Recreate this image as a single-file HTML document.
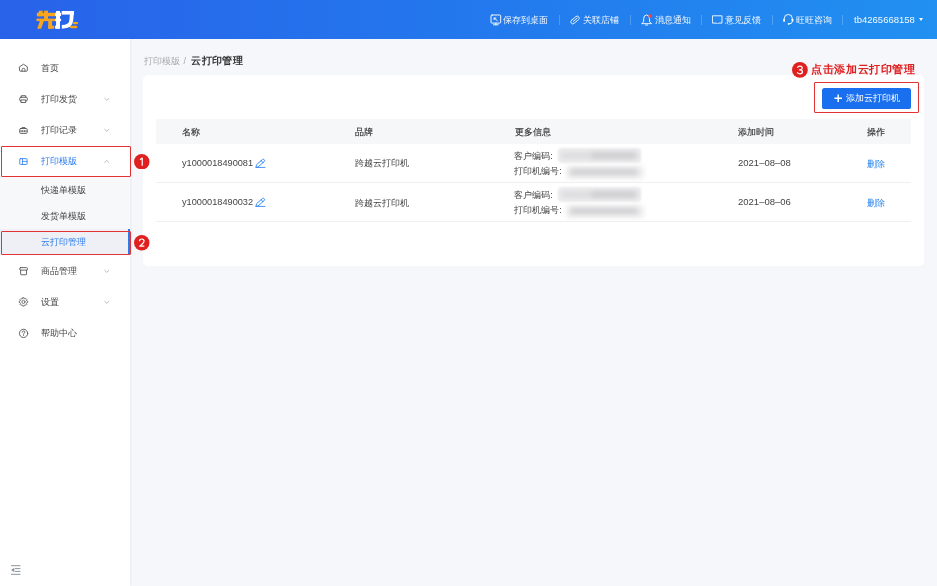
<!DOCTYPE html>
<html lang="zh">
<head>
<meta charset="utf-8">
<title>云打印管理</title>
<style>
*{box-sizing:border-box;margin:0;padding:0}
html,body{width:937px;height:586px;overflow:hidden}
body{font-family:"Liberation Sans",sans-serif;font-size:9.2px;color:#333;background:#f6f7fa;position:relative}
svg{display:block}
/* header */
.hd{position:absolute;left:0;top:0;width:937px;height:39px;background:linear-gradient(90deg,#2862e9 0%,#2378ed 50%,#2190f1 100%)}
.logo{position:absolute;left:36px;top:10px}
.hnav{position:absolute;top:0.5px;height:39px;color:rgba(255,255,255,.95);font-size:9.35px;line-height:39px;white-space:nowrap}
.hnav svg{position:absolute}
.hsep{position:absolute;top:14.6px;width:1px;height:10px;background:rgba(255,255,255,.22)}
/* sidebar */
.sb{position:absolute;left:0;top:39px;width:130.1px;height:547px;background:#fff;box-shadow:1px 0 2px rgba(0,20,60,.05)}
.it{position:absolute;left:0;width:130px;height:31px;line-height:31px;color:#444;font-size:9.2px}
.it .tx{position:absolute;left:41px;top:0}
.it .ic{position:absolute;left:19px;top:10.8px;width:9px;height:9px}
.it .ar{position:absolute;left:104.2px;top:13.2px;width:5.6px;height:4.8px}
.sub{position:absolute;left:0;width:130px;height:26px;line-height:26px;color:#444;font-size:9.2px;padding-left:41px}
.redbox{position:absolute;border:1.5px solid #e23232;border-radius:1px;z-index:5}
.num{z-index:6;position:absolute;width:15.5px;height:15.5px}
/* main */
.bc{position:absolute;left:143.9px;top:54.1px;font-size:9.2px;line-height:14px;color:#a6a8ad;white-space:nowrap}
.bc b{position:absolute;left:47.4px;top:0.1px;letter-spacing:0.35px;font-size:10.45px;color:#333;font-weight:bold}
.bc i{position:absolute;left:39.6px;top:0;font-style:normal}
.card{position:absolute;left:143px;top:75px;width:781px;height:190.6px;background:#fff;border-radius:5px}
.btn{position:absolute;left:822.4px;top:88px;width:88.5px;height:20.8px;background:#1a6fee;border-radius:2.6px;color:#fff;font-size:9.2px;line-height:20.8px;white-space:nowrap}
.th{position:absolute;left:156px;top:119.2px;width:755px;height:24.6px;background:#f6f7f9}
.c{position:absolute;white-space:nowrap;font-size:9.2px;line-height:12px;color:#444}
.c.h{font-weight:500;color:#333;-webkit-text-stroke:0.15px #333}
.c.n{font-size:9.5px}
.c.k{transform:scaleX(.968);transform-origin:0 0}
.hl{position:absolute;left:156px;width:755px;height:1px;background:#eeeff2}
.blur{position:absolute;border-radius:3px}
.a{color:#2b85f0}
.tip{position:absolute;left:811.3px;top:61px;letter-spacing:0.58px;font-size:11.4px;line-height:16px;color:#e02020;font-weight:bold;white-space:nowrap}
</style>
</head>
<body style="will-change:transform">

<!-- ===== header ===== -->
<div class="hd">
  <svg class="logo" style="left:30px;top:5px" width="56" height="30" viewBox="0 0 937 502">
    <g fill="#f9a51c">
      <rect x="115" y="130" width="306" height="58"/>
      <polygon points="150,95 216,95 196,188 130,188"/>
      <rect x="236" y="95" width="66" height="160"/>
      <rect x="108" y="228" width="313" height="42"/>
      <polygon points="166,268 232,268 186,396 120,396"/>
      <rect x="305" y="268" width="64" height="128"/>
      <rect x="305" y="346" width="100" height="50"/>
      <rect x="720" y="286" width="84" height="36" rx="18"/>
      <rect x="668" y="346" width="124" height="44" rx="21"/>
    </g>
    <g fill="#fff">
      <rect x="436" y="100" width="66" height="296"/>
      <rect x="420" y="130" width="100" height="56"/>
      <rect x="420" y="230" width="100" height="40"/>
      <rect x="420" y="346" width="82" height="50"/>
      <rect x="530" y="100" width="206" height="60"/>
    </g>
    <path d="M702 130 L690 262 Q682 362 532 366" fill="none" stroke="#fff" stroke-width="64"/>
  </svg>

  <svg style="position:absolute;left:489.6px;top:13.5px" width="12" height="12" viewBox="0 0 12 12" fill="none" stroke="#fff" stroke-linecap="round" stroke-linejoin="round"><rect x="1" y="1" width="9.7" height="8.1" rx="1" stroke-width="0.95"/><path d="M3.5 10.8 H8.2 M5.85 9.2 V10.8" stroke-width="0.95"/><path d="M4.1 4 L7.3 6.7 M4.1 5.7 V4 H5.9" stroke-width="0.9"/></svg><svg style="position:absolute;left:570.2px;top:14.5px" width="10" height="10" viewBox="0 0 11 11" fill="none" stroke="#fff" stroke-linecap="round" stroke-linejoin="round"><g transform="rotate(-40 5.5 5.5)"><rect x="0.1" y="3.3" width="10.8" height="4.4" rx="2.2" stroke-width="0.9"/><path d="M3 5.5 H8.6" stroke-width="0.9"/></g></svg><svg style="position:absolute;left:641px;top:13.5px" width="12" height="12" viewBox="0 0 12 12" fill="none" stroke="#fff" stroke-linecap="round" stroke-linejoin="round"><path d="M0.9 9.4 L2.7 7.9 V4.8 Q2.7 1 5.6 1 Q8.5 1 8.5 4.8 V7.9 L10.3 9.4 Z" stroke-width="0.9"/><path d="M4.5 11 H6.7" stroke-width="0.9"/><circle cx="9.2" cy="2.1" r="1.75" fill="#ff3d3d" stroke="none"/></svg><svg style="position:absolute;left:711.8px;top:14.6px" width="10.8" height="9.9" viewBox="0 0 12 11" fill="none" stroke="#fff" stroke-linecap="round" stroke-linejoin="round"><path d="M0.9 0.9 H11.1 V9 H7.2 L6 10.3 L4.8 9 H0.9 Z" stroke-width="1" stroke-linejoin="miter"/></svg><svg style="position:absolute;left:781.6px;top:12.7px" width="12.6" height="12.6" viewBox="0 0 12 12" fill="none" stroke="#fff" stroke-linecap="round" stroke-linejoin="round"><path d="M2.2 6.4 V5.2 Q2.2 1.4 6 1.4 Q9.8 1.4 9.8 5.2 V6.4" stroke-width="0.9"/><rect x="1.2" y="5.4" width="1.6" height="3" rx="0.6" fill="#fff" stroke="none"/><rect x="9.2" y="5.4" width="1.6" height="3" rx="0.6" fill="#fff" stroke="none"/><path d="M9.8 8.4 Q9.8 10.4 6.8 10.4" stroke-width="0.9"/><circle cx="6.3" cy="10.4" r="0.8" fill="#fff" stroke="none"/></svg>
  <div class="hnav" style="left:503.4px">保存到桌面</div>
  <div class="hsep" style="left:559.1px"></div>
  <div class="hnav" style="left:583.4px">关联店铺</div>
  <div class="hsep" style="left:629.9px"></div>
  <div class="hnav" style="left:654.5px">消息通知</div>
  <div class="hsep" style="left:701.2px"></div>
  <div class="hnav" style="left:725.2px">意见反馈</div>
  <div class="hsep" style="left:771.6px"></div>
  <div class="hnav" style="left:795.8px">旺旺咨询</div>
  <div class="hsep" style="left:842.3px"></div>
  <div class="hnav" style="left:854.1px;top:-0.4px;font-size:9.5px">tb4265668158</div>
  <div style="position:absolute;left:919.3px;top:17.9px;width:0;height:0;border-left:2.3px solid transparent;border-right:2.3px solid transparent;border-top:3.5px solid #fff"></div>
</div>

<!-- ===== sidebar ===== -->
<div class="sb">
  <svg style="position:absolute;left:18px;top:24px;overflow:visible" width="12" height="12" viewBox="0 0 12 12" fill="none" stroke-linecap="round" stroke-linejoin="round"><path d="M1.6 3.75 L5.45 1.25 L9.3 3.75 V7.6 Q9.3 8.2 8.7 8.2 H2.2 Q1.6 8.2 1.6 7.6 Z" stroke="#555" stroke-width="0.9"/><path d="M4 8.2 V6.5 Q4 5.3 5.45 5.3 Q6.9 5.3 6.9 6.5 V8.2" stroke="#555" stroke-width="0.85"/></svg>
  <svg style="position:absolute;left:18px;top:55px;overflow:visible" width="12" height="12" viewBox="0 0 12 12" fill="none" stroke-linecap="round" stroke-linejoin="round"><path d="M3.3 3.2 V1.7 H7.7 V3.2" stroke="#555" stroke-width="0.9"/><rect x="1.75" y="3.3" width="7.5" height="3.6" rx="0.9" stroke="#555" stroke-width="0.9"/><rect x="3.3" y="5.9" width="4.4" height="2.6" fill="#fff" stroke="#555" stroke-width="0.9"/></svg>
  <svg style="position:absolute;left:18px;top:87px;overflow:visible" width="12" height="12" viewBox="0 0 12 12" fill="none" stroke-linecap="round" stroke-linejoin="round"><path d="M4 2.4 V1.5 H7 V2.4" stroke="#555" stroke-width="0.85"/><rect x="1.75" y="2.5" width="7.4" height="4.9" rx="0.9" stroke="#555" stroke-width="0.9"/><path d="M1.8 5.1 H9.1" stroke="#555" stroke-width="0.8"/><path d="M4.2 4.4 V5.8 M6.7 4.4 V5.8" stroke="#555" stroke-width="0.8"/></svg>
  <svg style="position:absolute;left:18px;top:118px;overflow:visible" width="12" height="12" viewBox="0 0 12 12" fill="none" stroke-linecap="round" stroke-linejoin="round"><rect x="1.75" y="1.65" width="7.3" height="5.8" rx="0.6" stroke="#3585f2" stroke-width="0.9"/><path d="M4.45 1.7 V7.4 M4.45 4.4 H9" stroke="#3585f2" stroke-width="0.85"/></svg>
  <svg style="position:absolute;left:18px;top:227px;overflow:visible" width="12" height="12" viewBox="0 0 12 12" fill="none" stroke-linecap="round" stroke-linejoin="round"><rect x="1.65" y="1.65" width="7.9" height="2.5" rx="1" stroke="#555" stroke-width="0.9"/><path d="M2.65 4.2 V8.2 Q2.65 8.75 3.2 8.75 H8 Q8.55 8.75 8.55 8.2 V4.2" stroke="#555" stroke-width="0.9"/></svg>
  <svg style="position:absolute;left:18px;top:257px;overflow:visible" width="12" height="12" viewBox="0 0 12 12" fill="none" stroke-linecap="round" stroke-linejoin="round"><path d="M4.79 1.70 L6.11 1.70 L6.31 2.56 L7.21 2.93 L7.95 2.46 L8.89 3.40 L8.42 4.14 L8.79 5.04 L9.65 5.24 L9.65 6.56 L8.79 6.76 L8.42 7.66 L8.89 8.40 L7.95 9.34 L7.21 8.87 L6.31 9.24 L6.11 10.10 L4.79 10.10 L4.59 9.24 L3.69 8.87 L2.95 9.34 L2.01 8.40 L2.48 7.66 L2.11 6.76 L1.25 6.56 L1.25 5.24 L2.11 5.04 L2.48 4.14 L2.01 3.40 L2.95 2.46 L3.69 2.93 L4.59 2.56 Z" stroke="#555" stroke-width="0.8"/><circle cx="5.45" cy="5.9" r="1.55" stroke="#555" stroke-width="0.8"/></svg>
  <svg style="position:absolute;left:18px;top:289px;overflow:visible" width="12" height="12" viewBox="0 0 12 12" fill="none" stroke-linecap="round" stroke-linejoin="round"><circle cx="5.6" cy="5.4" r="4.15" stroke="#555" stroke-width="0.9"/><path d="M4.199999999999999 4.2 Q4.199999999999999 3.0000000000000004 5.6 3.0000000000000004 Q7.0 3.0000000000000004 7.0 4.2 Q7.0 5.0 5.6 5.6000000000000005 V6.300000000000001" stroke="#555" stroke-width="0.85"/><circle cx="5.6" cy="7.6000000000000005" r="0.5" fill="#555"/></svg>
  <div class="it" style="top:13.8px"><span class="tx">首页</span></div>
  <div class="it" style="top:45.1px"><span class="tx">打印发货</span><svg class="ar" width="7" height="6" viewBox="0 0 7 6" fill="none" stroke-linecap="round" stroke-linejoin="round" style=""><path d="M1 1.8 L3.5 4.2 L6 1.8" stroke="#999" stroke-width="0.85"/></svg></div>
  <div class="it" style="top:76.3px"><span class="tx">打印记录</span><svg class="ar" width="7" height="6" viewBox="0 0 7 6" fill="none" stroke-linecap="round" stroke-linejoin="round" style=""><path d="M1 1.8 L3.5 4.2 L6 1.8" stroke="#999" stroke-width="0.85"/></svg></div>
  <div class="it" style="top:107.3px;color:#2b7bf0"><span class="tx">打印模版</span><svg class="ar" width="7" height="6" viewBox="0 0 7 6" fill="none" stroke-linecap="round" stroke-linejoin="round" style=""><path d="M1 4.2 L3.5 1.8 L6 4.2" stroke="#999" stroke-width="0.85"/></svg></div>
  <div style="position:absolute;left:0;top:138px;width:130px;height:78px;background:#f7f8fa"></div>
  <div class="sub" style="top:138px">快递单模版</div>
  <div class="sub" style="top:164px">发货单模版</div>
  <div class="sub" style="top:190px;background:#eef0f5;color:#2b7bf0;border-right:2px solid #2b7bf0">云打印管理</div>
  <div class="it" style="top:216.6px"><span class="tx">商品管理</span><svg class="ar" width="7" height="6" viewBox="0 0 7 6" fill="none" stroke-linecap="round" stroke-linejoin="round" style=""><path d="M1 1.8 L3.5 4.2 L6 1.8" stroke="#999" stroke-width="0.85"/></svg></div>
  <div class="it" style="top:248.2px"><span class="tx">设置</span><svg class="ar" width="7" height="6" viewBox="0 0 7 6" fill="none" stroke-linecap="round" stroke-linejoin="round" style=""><path d="M1 1.8 L3.5 4.2 L6 1.8" stroke="#999" stroke-width="0.85"/></svg></div>
  <div class="it" style="top:279.1px"><span class="tx">帮助中心</span></div>
<svg style="position:absolute;left:11px;top:526px" width="10" height="10" viewBox="0 0 10 10"><path d="M0 0.7 H9.4 M4 3.6 H9.4 M4 6.4 H9.4 M0 9.3 H9.4" stroke="#8d929c" stroke-width="1"/><path d="M3.3 2.7 V7.3 L0.1 5 Z" fill="#8d929c"/></svg>
</div>
<div class="redbox" style="left:1.2px;top:145.7px;width:130px;height:31px"></div>
<div class="redbox" style="left:1.2px;top:230.8px;width:130px;height:24px"></div>
<svg class="num" style="left:134px;top:153.6px" viewBox="0 0 16 16"><circle cx="8" cy="8" r="8" fill="#e0201f"/><path d="M6.2 5.9 L8.5 4.2 V12.1" fill="none" stroke="#fff" stroke-width="1.22" stroke-linejoin="round"/></svg>
<svg class="num" style="left:134px;top:235.2px" viewBox="0 0 16 16"><circle cx="8" cy="8" r="8" fill="#e0201f"/><path d="M5.6 6.4 Q5.6 4.1 8 4.1 Q10.4 4.1 10.4 6.3 Q10.4 7.6 8.8 9 L5.9 11.5 H10.7" fill="none" stroke="#fff" stroke-width="1.22" stroke-linejoin="round"/></svg>

<!-- ===== main ===== -->
<div class="bc">打印模版<i>/</i><b>云打印管理</b></div>
<div class="card"></div>
<svg class="num" style="left:792.4px;top:61.9px;width:15.8px;height:15.8px" viewBox="0 0 16 16"><circle cx="8" cy="8" r="8" fill="#e0201f"/><path d="M5.5 5.9 Q6 4.1 8 4.1 Q10.3 4.1 10.3 6 Q10.3 7.8 7.5 7.9 Q10.6 7.9 10.6 9.9 Q10.6 12 8 12 Q5.8 12 5.3 10.3" fill="none" stroke="#fff" stroke-width="1.22" stroke-linejoin="round"/></svg>
<div class="tip">点击添加云打印管理</div>
<div class="redbox" style="left:814px;top:82px;width:105.2px;height:30.8px"></div>
<div class="btn"><svg style="position:absolute;left:11.6px;top:6.3px" width="8.4" height="8.4" viewBox="0 0 8 8"><path d="M4 0.4 V7.6 M0.4 4 H7.6" stroke="#fff" stroke-width="1.4"/></svg><span style="position:absolute;left:23.6px">添加云打印机</span></div>

<div class="th"></div>
<div class="c h" style="left:182.4px;top:125.6px">名称</div>
<div class="c h" style="left:355px;top:125.6px">品牌</div>
<div class="c h" style="left:515px;top:125.6px">更多信息</div>
<div class="c h" style="left:738px;top:125.7px">添加时间</div>
<div class="c h" style="left:867px;top:125.7px">操作</div>

<div class="c n k" style="left:182.2px;top:157.1px">y1000018490081</div><svg style="position:absolute;left:255px;top:158.0px;overflow:visible" width="11" height="11" viewBox="0 0 11 11" fill="none" stroke="#3086f3" stroke-width="0.85" stroke-linecap="round" stroke-linejoin="round"><g transform="translate(1.1 8.9) rotate(-41.2)"><path d="M0 0 L1.7 -1.35 H9.5 A1.35 1.35 0 0 1 9.5 1.35 H1.7 Z"/><path d="M7.9 -1.35 V1.35"/></g><path d="M0.8 9.45 H10"/></svg>
<div class="c" style="left:355px;top:157.4px">跨越云打印机</div>
<div class="c" style="left:514.2px;top:149.5px">客户编码:</div>
<div class="c" style="left:514.2px;top:165.2px">打印机编号:</div>
<div class="blur" style="left:557.6px;top:147.6px;width:83.6px;height:15.6px;background:#ededef;filter:blur(1.1px)"></div>
<div class="blur" style="left:561px;top:151.6px;width:77px;height:7.6px;background:#dcdcde;filter:blur(2.4px)"></div>
<div class="blur" style="left:591px;top:153.2px;width:45px;height:4.6px;background:#cdcdcf;filter:blur(2.4px)"></div>
<div class="blur" style="left:566px;top:166.0px;width:78px;height:13px;background:#eeeeef;filter:blur(2.4px)"></div>
<div class="blur" style="left:570px;top:169.2px;width:68px;height:5.6px;background:#cfcfd1;filter:blur(2.4px)"></div>
<div class="c n" style="left:738px;top:157.2px">2021–08–08</div>
<div class="c a" style="left:867px;top:157.6px">删除</div>
<div class="hl" style="top:182.1px"></div>

<div class="c n k" style="left:182.2px;top:196.2px">y1000018490032</div><svg style="position:absolute;left:255px;top:197.1px;overflow:visible" width="11" height="11" viewBox="0 0 11 11" fill="none" stroke="#3086f3" stroke-width="0.85" stroke-linecap="round" stroke-linejoin="round"><g transform="translate(1.1 8.9) rotate(-41.2)"><path d="M0 0 L1.7 -1.35 H9.5 A1.35 1.35 0 0 1 9.5 1.35 H1.7 Z"/><path d="M7.9 -1.35 V1.35"/></g><path d="M0.8 9.45 H10"/></svg>
<div class="c" style="left:355px;top:196.5px">跨越云打印机</div>
<div class="c" style="left:514.2px;top:188.6px">客户编码:</div>
<div class="c" style="left:514.2px;top:204.29999999999998px">打印机编号:</div>
<div class="blur" style="left:557.6px;top:186.7px;width:83.6px;height:15.6px;background:#ededef;filter:blur(1.1px)"></div>
<div class="blur" style="left:561px;top:190.7px;width:77px;height:7.6px;background:#dcdcde;filter:blur(2.4px)"></div>
<div class="blur" style="left:591px;top:192.3px;width:45px;height:4.6px;background:#cdcdcf;filter:blur(2.4px)"></div>
<div class="blur" style="left:566px;top:205.1px;width:78px;height:13px;background:#eeeeef;filter:blur(2.4px)"></div>
<div class="blur" style="left:570px;top:208.3px;width:68px;height:5.6px;background:#cfcfd1;filter:blur(2.4px)"></div>
<div class="c n" style="left:738px;top:196.3px">2021–08–06</div>
<div class="c a" style="left:867px;top:196.7px">删除</div>
<div class="hl" style="top:221.2px"></div>

</body>
</html>
